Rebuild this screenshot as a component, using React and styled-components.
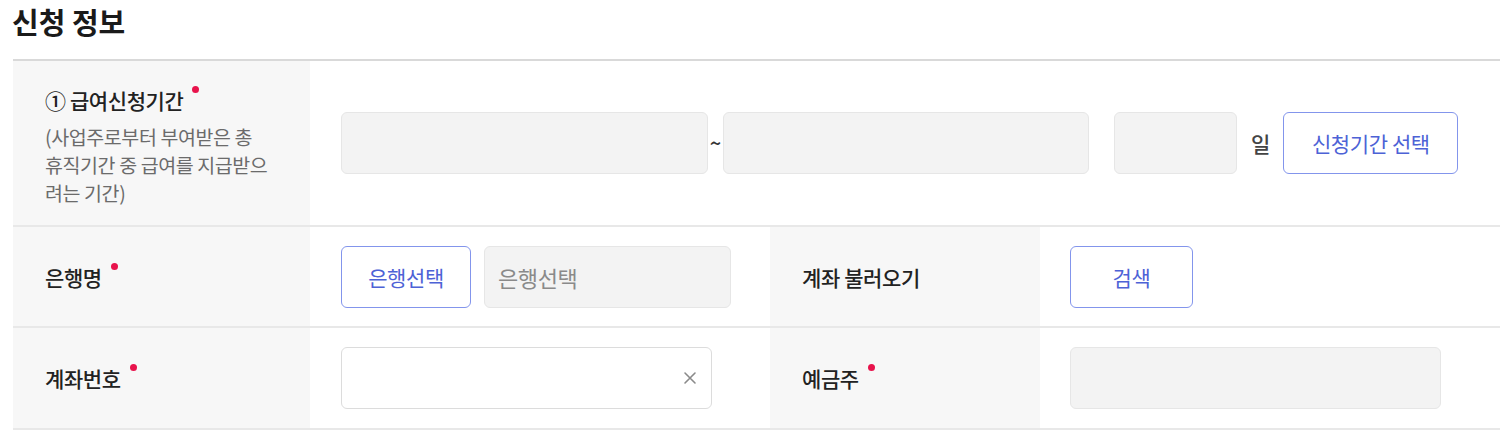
import React from 'react';
import styled, { createGlobalStyle } from 'styled-components';

const GlobalStyle = createGlobalStyle`
  body {
    margin: 0;
    background: #fff;
    font-family: "Noto Sans CJK KR", "Noto Sans", sans-serif;
    color: #222;
  }
`;

const Page = styled.div`
  padding: 0 4px 0 12px;
`;

const Title = styled.h2`
  margin: 0;
  height: 59px;
  padding-top: 3px;
  box-sizing: border-box;
  font-size: 29px;
  font-weight: 700;
  line-height: 36px;
  color: #1a1a1a;
  letter-spacing: 0;
`;

const Table = styled.div`
  margin-left: 1px;
  border-top: 2px solid #d9d9d9;
`;

const Row = styled.div`
  display: grid;
  grid-template-columns: 297px 460px 270px 1fr;
  min-height: ${(p) => p.$height}px;
  border-bottom: 2px solid #e8e8e8;
`;

const LabelCell = styled.div`
  background: #f7f7f7;
  padding-left: 32px;
  padding-right: 10px;
  padding-top: ${(p) => p.$offset || 0}px;
  box-sizing: border-box;
  display: flex;
  flex-direction: column;
  justify-content: center;
`;

const LabelText = styled.div`
  font-size: 21px;
  font-weight: 500;
  color: #222;
  letter-spacing: -0.4px;
  line-height: 28px;
`;

const Required = styled.span`
  display: inline-block;
  width: 7px;
  height: 7px;
  border-radius: 50%;
  background: #e8134c;
  margin-left: 9px;
  vertical-align: top;
`;

const Desc = styled.div`
  margin-top: 9px;
  font-size: 19.5px;
  line-height: 28px;
  color: #6b6b6b;
  letter-spacing: -0.4px;
`;

const Content = styled.div`
  grid-column: ${(p) => p.$span || 'auto'};
  display: flex;
  align-items: center;
  padding-left: ${(p) => p.$pad ?? 31}px;
`;

const Field = styled.div`
  position: relative;
  width: ${(p) => p.$w}px;
  height: 62px;
  box-sizing: border-box;
  border-radius: 6px;
  border: 1px solid ${(p) => (p.$readonly ? '#e6e6e6' : '#dcdcdc')};
  background: ${(p) => (p.$readonly ? '#f3f3f3' : '#fff')};
  display: flex;
  align-items: center;
  padding: 0 13px;
  font-size: 22px;
  color: #8a8a8a;
  margin-left: ${(p) => p.$ml || 0}px;
  letter-spacing: -0.4px;
`;

const Tilde = styled.span`
  width: 15px;
  text-align: center;
  font-size: 20px;
  font-weight: 500;
  color: #333;
  line-height: 1;
`;

const Unit = styled.span`
  margin: 0 13px 0 14px;
  font-size: 21px;
  font-weight: 500;
  color: #444;
`;

const OutlineButton = styled.button`
  width: ${(p) => p.$w}px;
  height: 62px;
  box-sizing: border-box;
  border: 1.5px solid #8395ec;
  border-radius: 6px;
  background: #fff;
  color: #4d62d6;
  font-family: inherit;
  font-size: 21px;
  letter-spacing: -0.4px;
  cursor: pointer;
  padding: 0;
`;

const ClearIcon = styled.svg`
  position: absolute;
  right: 14px;
  top: 50%;
  transform: translateY(-50%);
`;

const Clear = () => (
  <ClearIcon width="14" height="14" viewBox="0 0 14 14">
    <path d="M2 2 L12 12 M12 2 L2 12" stroke="#8a8a8a" strokeWidth="1.6" strokeLinecap="round" />
  </ClearIcon>
);

const App = () => (
  <Page>
    <GlobalStyle />
    <Title>신청 정보</Title>
    <Table>
      <Row $height={164}>
        <LabelCell $offset={6}>
          <LabelText>
            ① 급여신청기간<Required />
          </LabelText>
          <Desc>
            (사업주로부터 부여받은 총<br />
            휴직기간 중 급여를 지급받으<br />
            려는 기간)
          </Desc>
        </LabelCell>
        <Content $span="2 / 5">
          <Field $readonly $w={367} />
          <Tilde>~</Tilde>
          <Field $readonly $w={366} />
          <Field $readonly $w={123} $ml={25} />
          <Unit>일</Unit>
          <OutlineButton $w={175}>신청기간 선택</OutlineButton>
        </Content>
      </Row>
      <Row $height={99}>
        <LabelCell>
          <LabelText>
            은행명<Required />
          </LabelText>
        </LabelCell>
        <Content>
          <OutlineButton $w={130}>은행선택</OutlineButton>
          <Field $readonly $w={247} $ml={13}>은행선택</Field>
        </Content>
        <LabelCell>
          <LabelText>계좌 불러오기</LabelText>
        </LabelCell>
        <Content $pad={30}>
          <OutlineButton $w={123}>검색</OutlineButton>
        </Content>
      </Row>
      <Row $height={100}>
        <LabelCell>
          <LabelText>
            계좌번호<Required />
          </LabelText>
        </LabelCell>
        <Content>
          <Field $w={371}>
            <Clear />
          </Field>
        </Content>
        <LabelCell>
          <LabelText>
            예금주<Required />
          </LabelText>
        </LabelCell>
        <Content $pad={30}>
          <Field $readonly $w={371} />
        </Content>
      </Row>
    </Table>
  </Page>
);

export default App;
